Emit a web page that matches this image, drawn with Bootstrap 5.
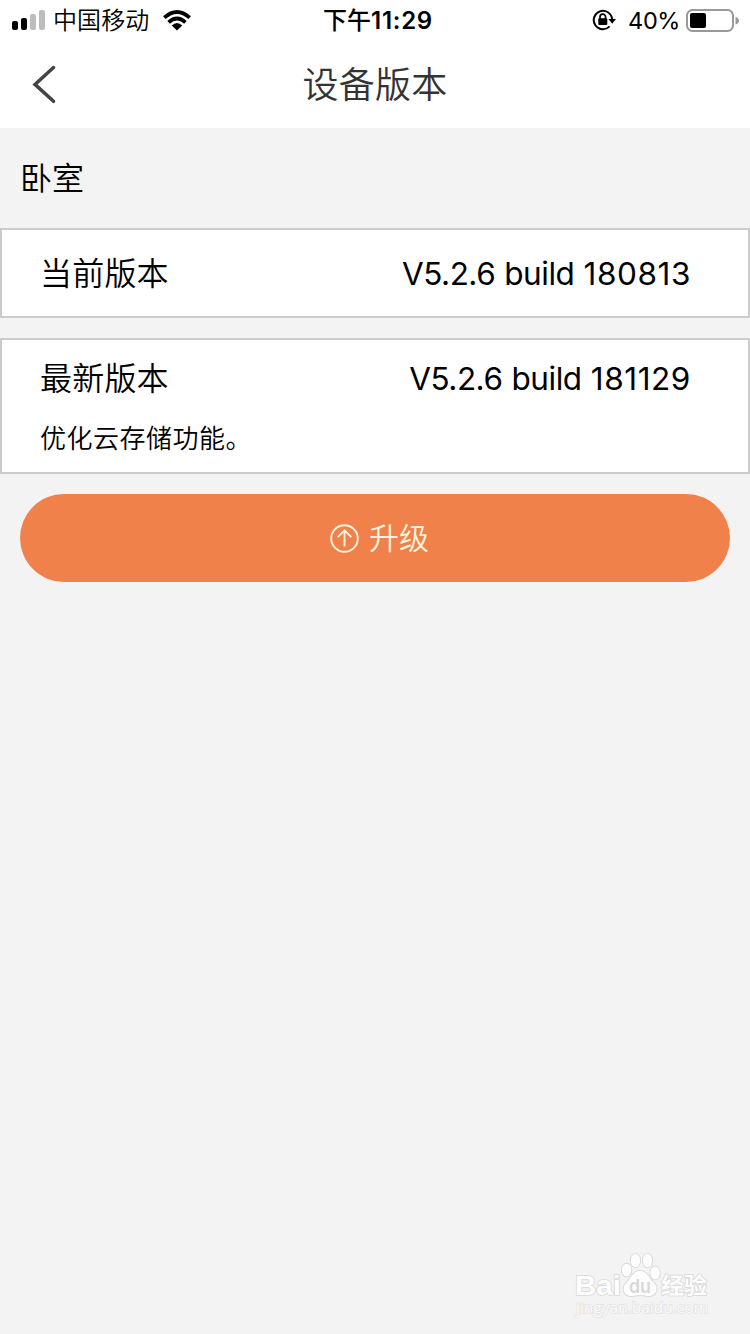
<!DOCTYPE html>
<html lang="zh-CN">
<head>
<meta charset="utf-8">
<meta name="viewport" content="width=device-width, initial-scale=1">
<title>设备版本</title>
<link rel="stylesheet" href="https://cdn.jsdelivr.net/npm/bootstrap@5.3.0/dist/css/bootstrap.min.css">
<style>
body{font-family:Inter,"Noto Sans CJK SC",sans-serif;background:#f3f3f3;color:#000;height:1334px;overflow:hidden;line-height:1}
svg{display:block;flex:none}
.statusbar{height:40px;font-size:24px;display:grid;grid-template-columns:1fr auto 1fr;padding:0 10px 0 12px}
.statusbar span{white-space:nowrap;padding-top:2px}
.carrier{font-weight:350;margin-left:7px;letter-spacing:.1px}
.wifi{margin-left:14px}
.clock{font-weight:600;letter-spacing:.7px;padding-left:4px}
.clock b{font-weight:450;letter-spacing:0}
.pct{margin:0 6px 0 12px;letter-spacing:-.4px;font-size:23.5px}
.titlebar{height:88px;color:#333}
.titlebar h1{font-size:36px;font-weight:350;line-height:90px;margin:0;width:750px;text-align:center;letter-spacing:.2px}
.back{left:32px;top:24px}
.room{height:100px;font-size:32px;font-weight:350;padding:2px 0 0 20px}
.panel{border:2px solid #ccc;border-radius:0;background:#fff;padding:0 58px 0 38px;font-size:32px;font-weight:350}
.panel .label{letter-spacing:.2px}
.current{height:90px;padding-top:1px}
.latest{height:136px;margin-top:20px}
.latest .line{height:78px}
.panel .ver{font-size:31.5px;font-weight:400;letter-spacing:-.5px;word-spacing:.8px;margin-right:-1px}
.ver .num{letter-spacing:.6px}
.notes{font-size:26px;letter-spacing:.5px;margin:0;line-height:41px}
.upgrade{height:88px;margin:20px 20px 0;background:#f0814b;color:#fff5dc;font-size:30px;font-weight:350;border:0;border-radius:44px;gap:10px;padding:0 0 0 9px}
.watermark{right:34px;bottom:10px;width:150px;height:74px}
</style>
</head>
<body class="d-flex flex-column">
<header class="bg-white">
  <div class="statusbar align-items-center">
    <div class="d-flex align-items-center">
      <svg width="34" height="20" viewBox="0 0 34 20"><rect x="0" y="11" width="6" height="9" rx="2"/><rect x="9" y="8" width="6" height="12" rx="2"/><g fill="#bdbdbd"><rect x="18" y="4" width="6" height="16" rx="2"/><rect x="27" y="0" width="6" height="20" rx="2"/></g></svg>
      <span class="carrier">中国移动</span>
      <svg class="wifi" width="28" height="21" viewBox="0 0 28 21"><g fill="none" stroke="#000" stroke-width="3.7"><path d="M1.3 7.7Q14-3.7 26.7 7.7"/><path d="M5.6 12.3Q14 4.7 22.4 12.3"/></g><path d="M8.7 15.5Q14 10.5 19.3 15.5L14 20.6Z"/></svg>
    </div>
    <span class="clock"><b>下午</b>11:29</span>
    <div class="d-flex align-items-center justify-content-end">
      <svg width="24" height="22" viewBox="0 0 24 22"><path d="M17.6 17.4A9.2 9.2 0 1 1 20.1 10" fill="none" stroke="#000" stroke-width="2"/><path d="M16.4 10H24l-3.8 4.8z"/><rect x="6.3" y="9.3" width="9" height="6.7" rx="1"/><path d="M8 10V8a2.8 2.8 0 0 1 5.6 0v2" fill="none" stroke="#000" stroke-width="1.7"/></svg>
      <span class="pct">40%</span>
      <svg width="54" height="24" viewBox="0 0 54 24"><rect x="1" y="2" width="46" height="21" rx="5.5" fill="none" stroke="#999" stroke-width="2"/><rect x="4" y="5" width="16" height="15" rx="2"/><path d="M49.5 9q3.5 1 3.5 3.8t-3.5 3.8z" fill="#999"/></svg>
    </div>
  </div>
  <div class="titlebar position-relative">
    <svg class="back position-absolute" width="26" height="40" viewBox="0 0 26 40"><path d="M21.5 3.5 3 20.4 21.5 37.3" fill="none" stroke="#444" stroke-width="3.5" stroke-linecap="round"/></svg>
    <h1>设备版本</h1>
  </div>
</header>
<main>
  <div class="room d-flex align-items-center">卧室</div>
  <section class="panel current d-flex align-items-center justify-content-between"><span class="label">当前版本</span><span class="ver">V5.2.6 build <span class="num">180813</span></span></section>
  <section class="panel latest">
    <div class="line d-flex align-items-center justify-content-between"><span class="label">最新版本</span><span class="ver">V5.2.6 build <span class="num">181129</span></span></div>
    <p class="notes">优化云存储功能。</p>
  </section>
  <div class="d-grid"><button type="button" class="btn upgrade d-flex align-items-center justify-content-center">
    <svg width="29" height="29" viewBox="0 0 29 29" fill="none" stroke="currentColor" stroke-width="1.9"><circle cx="14.5" cy="14.5" r="13.3"/><path d="M14.5 22.5V6.5M7.7 13.2l6.8-6.8 6.8 6.8"/></svg>
    <span>升级</span></button></div>
</main>
<svg class="watermark position-absolute" viewBox="566 1250 150 74" fill="#fdfdfd" stroke="#d9d9d9" stroke-width="1.6" paint-order="stroke">
  <text x="575" y="1294.500" font-family="Liberation Sans,sans-serif" font-weight="700" font-size="28" textLength="46" lengthAdjust="spacingAndGlyphs">Bai</text>
  <g stroke-width="1.8"><ellipse cx="626.5" cy="1270" rx="4.7" ry="6.3"/><ellipse cx="635.5" cy="1260.5" rx="4.7" ry="6.7"/><ellipse cx="647.5" cy="1260.5" rx="4.7" ry="6.7"/><ellipse cx="655" cy="1273" rx="4.7" ry="6.5"/>
  <path d="M640 1271C632 1271 631 1279 627 1282C620 1289 625 1297 633 1296Q640 1294 647 1296C656 1297 660 1288 653 1282C648 1278 648 1271 640 1271Z"/></g>
  <text x="629" y="1293" font-family="Inter,sans-serif" font-weight="600" font-size="19" textLength="22" lengthAdjust="spacingAndGlyphs" fill="#d8d8d8" stroke="none">du</text>
  <text x="661" y="1293" font-family="Noto Sans CJK SC,sans-serif" font-weight="700" font-size="22" textLength="46" lengthAdjust="spacingAndGlyphs">经验</text>
  <text x="576" y="1312.5" font-family="Open Sans,sans-serif" font-size="14" textLength="132" lengthAdjust="spacingAndGlyphs" stroke="#e2e2e2" stroke-width="1.3" fill="#fafafa">jingyan.baidu.com</text>
</svg>
<script src="https://cdn.jsdelivr.net/npm/bootstrap@5.3.0/dist/js/bootstrap.bundle.min.js"></script>
</body>
</html>
